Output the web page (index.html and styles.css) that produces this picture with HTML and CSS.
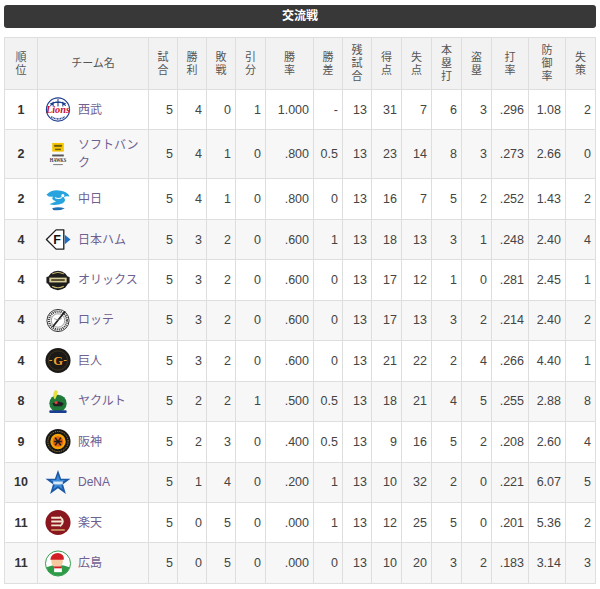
FILE: index.html
```html
<!DOCTYPE html>
<html lang="ja">
<head>
<meta charset="utf-8">
<title>交流戦</title>
<link rel="stylesheet" href="styles.css">
</head>
<body>
<div class="page">
  <div class="title">交流戦</div>
  <table class="standings">
    <colgroup>
      <col class="c-rank"><col class="c-team"><col class="c-n"><col class="c-n"><col class="c-n"><col class="c-n30"><col class="c-pct"><col class="c-n"><col class="c-n"><col class="c-n30"><col class="c-n30"><col class="c-n30"><col class="c-n30"><col class="c-avg"><col class="c-avg"><col class="c-n30">
    </colgroup>
    <thead>
      <tr>
        <th>順<br>位</th>
        <th>チーム名</th>
        <th>試<br>合</th>
        <th>勝<br>利</th>
        <th>敗<br>戦</th>
        <th>引<br>分</th>
        <th>勝<br>率</th>
        <th>勝<br>差</th>
        <th>残<br>試<br>合</th>
        <th>得<br>点</th>
        <th>失<br>点</th>
        <th>本<br>塁<br>打</th>
        <th>盗<br>塁</th>
        <th>打<br>率</th>
        <th>防<br>御<br>率</th>
        <th>失<br>策</th>
      </tr>
    </thead>
    <tbody>
      <tr>
        <td class="rank">1</td>
        <td class="team"><div class="team-in">
          <svg class="logo" viewBox="0 0 28 28"><circle cx="14" cy="14" r="12" fill="#fff" stroke="#1f3f8f" stroke-width="1.2"/><path d="M6 10 Q14 2 22 10 M9 6 L9 11 M14 3 L14 11 M19 6 L19 11 M6 8 Q14 5 22 8" stroke="#1f3f8f" fill="none" stroke-width="1.1"/><text x="14" y="18" font-family="Liberation Serif" font-style="italic" font-weight="bold" font-size="10" fill="#c8102e" text-anchor="middle" textLength="25" lengthAdjust="spacingAndGlyphs">Lions</text><path d="M7 21.5 Q14 26 21 21.5" stroke="#1f3f8f" fill="none" stroke-width="1.6" stroke-dasharray="1 0.6"/></svg>
          <span class="name">西武</span></div></td>
        <td>5</td><td>4</td><td>0</td><td>1</td><td>1.000</td><td>-</td><td>13</td><td>31</td><td>7</td><td>6</td><td>3</td><td>.296</td><td>1.08</td><td>2</td>
      </tr>
      <tr>
        <td class="rank">2</td>
        <td class="team"><div class="team-in">
          <svg class="logo" viewBox="0 0 28 28"><rect x="8" y="2" width="12" height="9" fill="#f5c400"/><rect x="10" y="4" width="8" height="2" fill="#6b5a10"/><rect x="11" y="8" width="6" height="1.5" fill="#6b5a10"/><rect x="8" y="14" width="12" height="2" fill="#555"/><text x="14" y="22" font-family="Liberation Serif" font-weight="bold" font-size="6" fill="#333" text-anchor="middle" textLength="17" lengthAdjust="spacingAndGlyphs">HAWKS</text><rect x="9" y="24" width="10" height="1" fill="#777"/></svg>
          <span class="name">ソフトバンク</span></div></td>
        <td>5</td><td>4</td><td>1</td><td>0</td><td>.800</td><td>0.5</td><td>13</td><td>23</td><td>14</td><td>8</td><td>3</td><td>.273</td><td>2.66</td><td>0</td>
      </tr>
      <tr>
        <td class="rank">2</td>
        <td class="team"><div class="team-in">
          <svg class="logo" viewBox="0 0 28 28"><path d="M2 9 Q8 3 17 5 Q24 6 26 11 Q22 10 20 12 Q23 15 19 18 Q12 21 5 19 Q9 17 12 16 Q6 14 9 11 Q5 12 2 9 Z" fill="#27a3dd"/><circle cx="19" cy="10" r="1.6" fill="#fff"/><path d="M11 12 Q14 14 18 12" stroke="#fff" stroke-width="1.2" fill="none"/><path d="M8 23 Q14 21 21 23 Q16 26 9 25" fill="#1f6fb5"/></svg>
          <span class="name">中日</span></div></td>
        <td>5</td><td>4</td><td>1</td><td>0</td><td>.800</td><td>0</td><td>13</td><td>16</td><td>7</td><td>5</td><td>2</td><td>.252</td><td>1.43</td><td>2</td>
      </tr>
      <tr>
        <td class="rank">4</td>
        <td class="team"><div class="team-in">
          <svg class="logo" viewBox="0 0 28 28"><polygon points="2,14 12,4 20,4 20,24 12,24" fill="#fff" stroke="#222" stroke-width="1.4" stroke-linejoin="round"/><text x="13" y="19" font-family="Liberation Sans" font-weight="bold" font-size="13" fill="#111" text-anchor="middle">F</text><polygon points="21,9 27,14 21,19" fill="#1d6fc2"/></svg>
          <span class="name">日本ハム</span></div></td>
        <td>5</td><td>3</td><td>2</td><td>0</td><td>.600</td><td>1</td><td>13</td><td>18</td><td>13</td><td>3</td><td>1</td><td>.248</td><td>2.40</td><td>4</td>
      </tr>
      <tr>
        <td class="rank">4</td>
        <td class="team"><div class="team-in">
          <svg class="logo" viewBox="0 0 28 28"><ellipse cx="14" cy="14" rx="11" ry="10" fill="#1d1d1b"/><rect x="2" y="10" width="24" height="7" rx="1" fill="#1d1d1b"/><rect x="5" y="11" width="18" height="5" fill="#d8cc9a"/><rect x="7" y="12.5" width="14" height="2" fill="#5b5230"/><path d="M8 20 Q14 23 20 20" stroke="#c9b774" stroke-width="1.2" fill="none"/><path d="M8 7 Q14 4 20 7" stroke="#c9b774" stroke-width="1" fill="none"/></svg>
          <span class="name">オリックス</span></div></td>
        <td>5</td><td>3</td><td>2</td><td>0</td><td>.600</td><td>0</td><td>13</td><td>17</td><td>12</td><td>1</td><td>0</td><td>.281</td><td>2.45</td><td>1</td>
      </tr>
      <tr>
        <td class="rank">4</td>
        <td class="team"><div class="team-in">
          <svg class="logo" viewBox="0 0 28 28"><circle cx="14" cy="14" r="11.5" fill="#fff" stroke="#333" stroke-width="1"/><circle cx="14" cy="14" r="9.3" fill="none" stroke="#444" stroke-width="2.4" stroke-dasharray="1.2 0.9"/><circle cx="14" cy="14" r="7" fill="#fff" stroke="#555" stroke-width="0.6"/><path d="M9 20 L21 5" stroke="#222" stroke-width="1.8" stroke-linecap="round"/><path d="M10 12 Q14 15 18 12" stroke="#888" stroke-width="0.8" fill="none"/></svg>
          <span class="name">ロッテ</span></div></td>
        <td>5</td><td>3</td><td>2</td><td>0</td><td>.600</td><td>0</td><td>13</td><td>17</td><td>13</td><td>3</td><td>2</td><td>.214</td><td>2.40</td><td>2</td>
      </tr>
      <tr>
        <td class="rank">4</td>
        <td class="team"><div class="team-in">
          <svg class="logo" viewBox="0 0 28 28"><circle cx="14" cy="14" r="13" fill="#1b1a17"/><circle cx="14" cy="14" r="10" fill="none" stroke="#4a3a20" stroke-width="0.8"/><text x="14" y="18.5" font-family="Liberation Serif" font-weight="bold" font-size="13" fill="#f0a030" text-anchor="middle">G</text><path d="M5 14 L8 14 M20 14 L23 14" stroke="#f0a030" stroke-width="1"/></svg>
          <span class="name">巨人</span></div></td>
        <td>5</td><td>3</td><td>2</td><td>0</td><td>.600</td><td>0</td><td>13</td><td>21</td><td>22</td><td>2</td><td>4</td><td>.266</td><td>4.40</td><td>1</td>
      </tr>
      <tr>
        <td class="rank">8</td>
        <td class="team"><div class="team-in">
          <svg class="logo" viewBox="0 0 28 28"><circle cx="14" cy="16" r="9" fill="#1f7a3a"/><path d="M11 2 Q7 8 11 12 Q13 8 14 4 Q13 2 11 2 Z" fill="#e8e040"/><path d="M8 16 Q14 12 20 16 L18 19 L10 19 Z" fill="#222"/><circle cx="12" cy="15" r="1.6" fill="#e94040"/><rect x="5" y="23" width="18" height="3" rx="1" fill="#1b3f8f"/></svg>
          <span class="name">ヤクルト</span></div></td>
        <td>5</td><td>2</td><td>2</td><td>1</td><td>.500</td><td>0.5</td><td>13</td><td>18</td><td>21</td><td>4</td><td>5</td><td>.255</td><td>2.88</td><td>8</td>
      </tr>
      <tr>
        <td class="rank">9</td>
        <td class="team"><div class="team-in">
          <svg class="logo" viewBox="0 0 28 28"><circle cx="14" cy="14" r="13" fill="#161616"/><circle cx="14" cy="14" r="10.5" fill="none" stroke="#d8b040" stroke-width="0.8" stroke-dasharray="1 1"/><circle cx="14" cy="14" r="8" fill="#f4a20a"/><circle cx="14" cy="14" r="5.5" fill="#e06010"/><path d="M11 10 L17 18 M17 10 L11 18 M10 14 L18 14" stroke="#1a1a1a" stroke-width="1.6"/></svg>
          <span class="name">阪神</span></div></td>
        <td>5</td><td>2</td><td>3</td><td>0</td><td>.400</td><td>0.5</td><td>13</td><td>9</td><td>16</td><td>5</td><td>2</td><td>.208</td><td>2.60</td><td>4</td>
      </tr>
      <tr>
        <td class="rank">10</td>
        <td class="team"><div class="team-in">
          <svg class="logo" viewBox="0 0 28 28"><polygon points="14,1 17.2,10 27,10 19.2,15.8 22.2,26 14,20 5.8,26 8.8,15.8 1,10 10.8,10" fill="#1d5aa6"/><polygon points="14,6 16,11.5 21.5,11.5 17,15 18.8,21 14,17.5 9.2,21 11,15 6.5,11.5 12,11.5" fill="#3d8bd8"/><rect x="9" y="13" width="10" height="3" fill="#fff" opacity="0.8"/></svg>
          <span class="name">DeNA</span></div></td>
        <td>5</td><td>1</td><td>4</td><td>0</td><td>.200</td><td>1</td><td>13</td><td>10</td><td>32</td><td>2</td><td>0</td><td>.221</td><td>6.07</td><td>5</td>
      </tr>
      <tr>
        <td class="rank">11</td>
        <td class="team"><div class="team-in">
          <svg class="logo" viewBox="0 0 28 28"><circle cx="14" cy="14" r="13" fill="#8a1720"/><path d="M7 9 L16 9 M7 13 L19 13 M7 17 L16 17" stroke="#f4e6d0" stroke-width="2"/><path d="M16 8 Q22 13 16 18" stroke="#f4e6d0" stroke-width="2" fill="none"/><rect x="7" y="21" width="14" height="1.5" fill="#d8b070"/></svg>
          <span class="name">楽天</span></div></td>
        <td>5</td><td>0</td><td>5</td><td>0</td><td>.000</td><td>1</td><td>13</td><td>12</td><td>25</td><td>5</td><td>0</td><td>.201</td><td>5.36</td><td>2</td>
      </tr>
      <tr>
        <td class="rank">11</td>
        <td class="team"><div class="team-in">
          <svg class="logo" viewBox="0 0 28 28"><circle cx="14" cy="14" r="13" fill="#fff" stroke="#2f9a48" stroke-width="1"/><path d="M2 18 Q14 13 26 18 Q24 26 14 27 Q4 26 2 18 Z" fill="#2f9a48"/><circle cx="13" cy="12" r="6" fill="#f6c9a0"/><path d="M6 10 Q7 3 14 3 Q21 4 20 10 Z" fill="#d21f26"/><rect x="10" y="17" width="8" height="6" fill="#fff"/><rect x="10" y="17" width="8" height="2" fill="#d21f26"/></svg>
          <span class="name">広島</span></div></td>
        <td>5</td><td>0</td><td>5</td><td>0</td><td>.000</td><td>0</td><td>13</td><td>10</td><td>20</td><td>3</td><td>2</td><td>.183</td><td>3.14</td><td>3</td>
      </tr>
    </tbody>
  </table>
</div>
</body>
</html>
```
FILE: styles.css
```css
html, body {
  margin: 0;
  padding: 0;
  background: #fff;
}
body {
  font-family: "Liberation Sans", "Noto Sans CJK JP", sans-serif;
  color: #333;
}
.page {
  padding: 5px 4px 0 4px;
}
.title {
  height: 23px;
  line-height: 23px;
  background: #383838;
  border-radius: 3px;
  color: #fff;
  text-align: center;
  font-size: 12px;
  font-weight: bold;
  margin-bottom: 9px;
}
.standings {
  width: 592px;
  border-collapse: collapse;
  table-layout: fixed;
  font-size: 12.5px;
}
.c-rank { width: 33px; }
.c-team { width: 111px; }
.c-n { width: 29px; }
.c-n30 { width: 30px; }
.c-pct { width: 48px; }
.c-avg { width: 37px; }
.standings th,
.standings td {
  border: 1px solid #dedede;
}
.standings th {
  background: #f2f2f2;
  color: #555;
  font-weight: normal;
  font-size: 11px;
  line-height: 13px;
  padding: 6px 0;
  height: 38px;
  text-align: center;
  vertical-align: middle;
}
.standings td {
  padding: 6px 4px;
  height: 27.45px;
  text-align: right;
  vertical-align: middle;
  line-height: 18px;
  color: #444;
}
.standings tbody tr:nth-child(even) td {
  background: #f7f7f7;
}
.standings td.rank {
  text-align: center;
  font-weight: bold;
  color: #333;
  padding: 6px 0;
}
.standings td.team {
  text-align: left;
  padding: 6px 5px 6px 6px;
}
.team-in {
  display: flex;
  align-items: center;
  gap: 6px;
}
.logo {
  width: 28px;
  height: 27px;
  flex: none;
}
.name {
  color: #6e6090;
  font-size: 12px;
  line-height: 18px;
}
```
